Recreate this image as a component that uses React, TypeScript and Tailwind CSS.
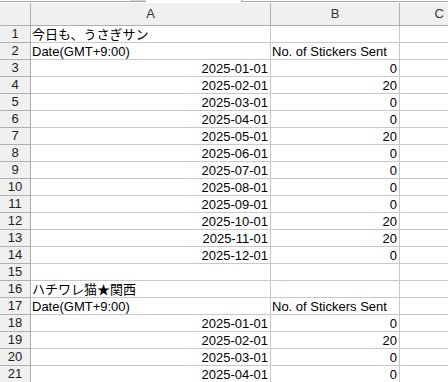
const font = { fontFamily: '"Liberation Sans", "Noto Sans CJK JP", sans-serif' };

type Row = { a?: string; b?: string; align?: "left" | "right" };

const months = ["01", "02", "03", "04", "05", "06", "07", "08", "09", "10", "11", "12"];
const first = [0, 20, 0, 0, 20, 0, 0, 0, 0, 20, 20, 0];
const second = [0, 20, 0, 0];

const rows: Row[] = [
  { a: "今日も、うさぎサン", align: "left" },
  { a: "Date(GMT+9:00)", b: "No. of Stickers Sent", align: "left" },
  ...first.map((v, i) => ({ a: `2025-${months[i]}-01`, b: String(v), align: "right" as const })),
  {},
  { a: "ハチワレ猫★関西", align: "left" },
  { a: "Date(GMT+9:00)", b: "No. of Stickers Sent", align: "left" },
  ...second.map((v, i) => ({ a: `2025-${months[i]}-01`, b: String(v), align: "right" as const })),
];

export default function App() {
  return (
    <div className="w-[448px] h-[382px] overflow-hidden bg-white text-[13px] text-black" style={font}>
      {/* formula bar remnant */}
      <div className="flex h-[3px]">
        <div className="flex w-[146px] h-[2px] border-b border-[#a8a8a8]">
          <div className="flex-1" />
          <div className="w-[16px] bg-[#d4d4d4]" />
        </div>
        <div className="w-[95px]" />
        <div className="flex-1 h-[2px] border-b border-l border-[#a8a8a8]" />
      </div>

      {/* column headers */}
      <div className="flex h-[23px] bg-[#f0f0f0] border-b border-[#aeaeae]">
        <div className="w-[31px] border-r border-[#aeaeae]" />
        <div className="w-[240px] border-r border-[#aeaeae] flex items-center justify-center text-[#333]">A</div>
        <div className="w-[129px] border-r border-[#aeaeae] flex items-center justify-center text-[#333]">B</div>
        <div className="flex-1 flex items-center justify-end pr-[4px] text-[#333]">C</div>
      </div>

      {rows.map((r, i) => (
        <div key={i} className="flex h-[17px]">
          <div className="w-[31px] shrink-0 bg-[#f0f0f0] border-r border-b border-[#aeaeae] flex items-center justify-center text-[#222]">
            {i + 1}
          </div>
          <div
            className={`w-[240px] shrink-0 border-r border-b border-[#c8c8c8] flex items-center whitespace-nowrap leading-none ${
              r.align === "right" ? "justify-end pr-[2px]" : "justify-start pl-[1px]"
            }`}
          >
            {r.a}
          </div>
          <div
            className={`w-[129px] shrink-0 border-r border-b border-[#c8c8c8] flex items-center whitespace-nowrap leading-none ${
              r.align === "right" ? "justify-end pr-[2px]" : "justify-start pl-[1px]"
            }`}
          >
            {r.b}
          </div>
          <div className="flex-1 border-b border-[#c8c8c8]" />
        </div>
      ))}
    </div>
  );
}
